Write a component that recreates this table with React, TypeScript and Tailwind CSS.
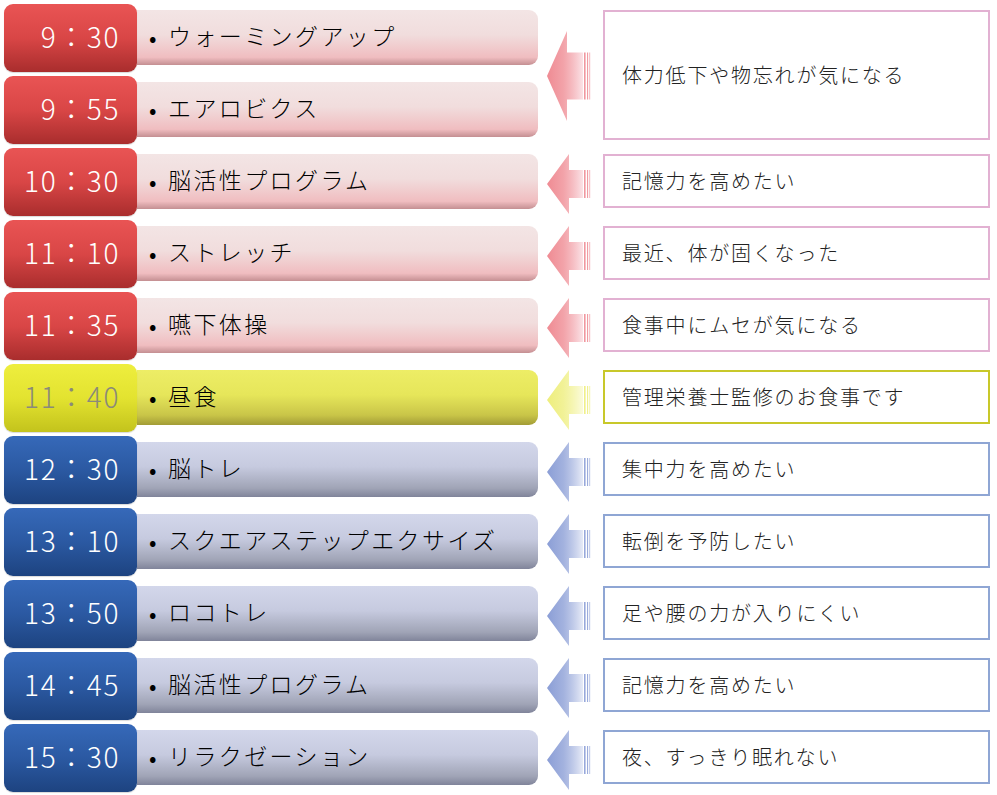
import React from "react";

type Tone = "red" | "yellow" | "blue";

const tones: Record<Tone, { time: string; bar: string; box: string; arrowFrom: string; arrowTo: string }> = {
  red: {
    time: "bg-[linear-gradient(180deg,#e95454_0%,#d94646_50%,#a92d2d_100%)] text-white",
    bar: "bg-[linear-gradient(180deg,#f3e5e5_0%,#f1dddd_45%,#f0bdc0_86%,#c48f92_100%)]",
    box: "border-[#e2b1d2]",
    arrowFrom: "#ef8b93",
    arrowTo: "#fbe3e7",
  },
  yellow: {
    time: "bg-[linear-gradient(180deg,#eeee3e_0%,#e3e330_50%,#c3c31c_100%)] text-[#8a8a7a]",
    bar: "bg-[linear-gradient(180deg,#eded66_0%,#e6e65a_45%,#c9c548_82%,#a29c36_100%)]",
    box: "border-[#c8c82a]",
    arrowFrom: "#eeee7c",
    arrowTo: "#fbfbdc",
  },
  blue: {
    time: "bg-[linear-gradient(180deg,#3669b9_0%,#2b59a2_50%,#1d4380_100%)] text-white",
    bar: "bg-[linear-gradient(180deg,#d3d7eb_0%,#c6cadf_45%,#a0a4b6_84%,#80849a_100%)]",
    box: "border-[#8fa6d4]",
    arrowFrom: "#8b9ed6",
    arrowTo: "#e7ebf7",
  },
};

const schedule: { time: string; name: string; tone: Tone; note?: string; big?: boolean }[] = [
  { time: "9：30", name: "ウォーミングアップ", tone: "red", note: "体力低下や物忘れが気になる", big: true },
  { time: "9：55", name: "エアロビクス", tone: "red" },
  { time: "10：30", name: "脳活性プログラム", tone: "red", note: "記憶力を高めたい" },
  { time: "11：10", name: "ストレッチ", tone: "red", note: "最近、体が固くなった" },
  { time: "11：35", name: "嚥下体操", tone: "red", note: "食事中にムセが気になる" },
  { time: "11：40", name: "昼食", tone: "yellow", note: "管理栄養士監修のお食事です" },
  { time: "12：30", name: "脳トレ", tone: "blue", note: "集中力を高めたい" },
  { time: "13：10", name: "スクエアステップエクサイズ", tone: "blue", note: "転倒を予防したい" },
  { time: "13：50", name: "ロコトレ", tone: "blue", note: "足や腰の力が入りにくい" },
  { time: "14：45", name: "脳活性プログラム", tone: "blue", note: "記憶力を高めたい" },
  { time: "15：30", name: "リラクゼーション", tone: "blue", note: "夜、すっきり眠れない" },
];

function Arrow({ id, from, to, big }: { id: string; from: string; to: string; big?: boolean }) {
  const h = big ? 90 : 60;
  const back = big ? 20 : 22;
  const shaft = big ? 47 : 28;
  const top = (h - shaft) / 2;
  return (
    <svg width="46" height={h} viewBox={`0 0 46 ${h}`}>
      <defs>
        <linearGradient id={id} x1="0" y1="0" x2="1" y2="0">
          <stop offset="0" stopColor={from} />
          <stop offset="0.45" stopColor={from} stopOpacity="0.8" />
          <stop offset="1" stopColor={to} />
        </linearGradient>
      </defs>
      <g fill={`url(#${id})`}>
        <polygon points={`0,${h / 2} ${back},0 ${back},${top} 36,${top} 36,${top + shaft} ${back},${top + shaft} ${back},${h}`} />
        <rect x="37" y={top} width="2" height={shaft} />
        <rect x="40" y={top} width="1.5" height={shaft} />
        <rect x="42.5" y={top} width="1" height={shaft} />
      </g>
    </svg>
  );
}

export default function App() {
  return (
    <div
      className="w-[997px] h-[795px] bg-white pl-[4px] pt-[4px] overflow-hidden font-light"
      style={{ fontFamily: '"Noto Sans CJK JP", "Noto Sans", sans-serif' }}
    >
      <div className="grid grid-cols-[133px_401px_65px_387px] grid-rows-[repeat(11,72px)]">
        {schedule.map((item, i) => {
          const t = tones[item.tone];
          return (
            <React.Fragment key={i}>
              <div
                className={`col-start-1 h-[68px] rounded-[9px] flex items-center justify-end pr-[17px] pb-[5px] text-[28px] tracking-[1.6px] leading-none shadow-[0_1px_1px_rgba(0,0,0,0.15)] z-10 ${t.time}`}
              >
                {item.time}
              </div>
              <div className={`col-start-2 mt-[6px] h-[55px] rounded-r-[9px] flex items-center pb-[4px] text-[23px] leading-none text-black ${t.bar}`}>
                <span className="w-[31px] pl-[12px] text-[22px] font-normal">•</span>
                <span className="tracking-[2.4px]">{item.name}</span>
              </div>
              {item.note && (
                <>
                  <div className={`col-start-3 flex items-center pl-[9px] ${item.big ? "row-span-2" : ""}`}>
                    <Arrow id={`ar${i}`} from={t.arrowFrom} to={t.arrowTo} big={item.big} />
                  </div>
                  <div
                    className={`col-start-4 mt-[6px] border-2 bg-white flex items-center pl-[17px] text-[20px] tracking-[1.8px] text-[#222] ${t.box} ${
                      item.big ? "row-span-2 h-[130px]" : "h-[54px]"
                    }`}
                  >
                    {item.note}
                  </div>
                </>
              )}
            </React.Fragment>
          );
        })}
      </div>
    </div>
  );
}
